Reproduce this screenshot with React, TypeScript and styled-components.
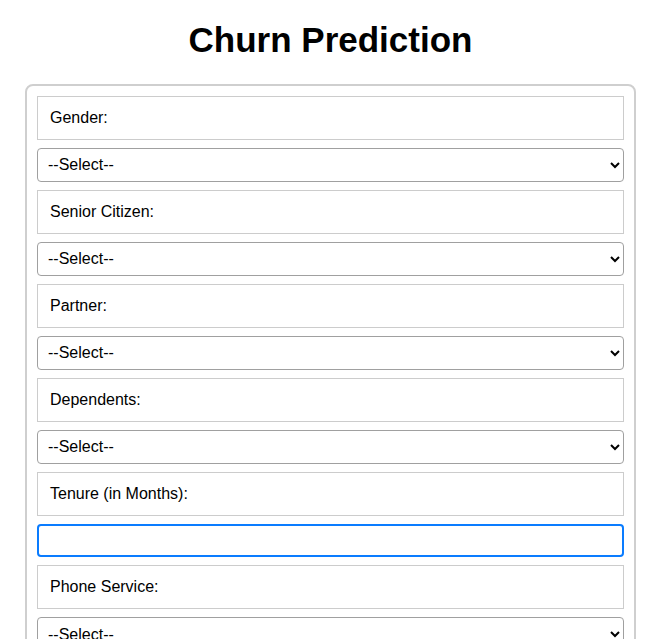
import React from "react";
import styled, { createGlobalStyle } from "styled-components";

const Global = createGlobalStyle`
  html, body { margin: 0; padding: 0; background: #fff; }
  body { font-family: "Liberation Sans", Arial, sans-serif; color: #000; }
`;

const Page = styled.div`
  padding: 19px 14px 0 25px;
`;

const Title = styled.h1`
  margin: 0 0 24px;
  font-size: 35px;
  line-height: 41px;
  font-weight: 700;
  text-align: center;
  width: 611px;
`;

const Card = styled.form`
  width: 611px;
  box-sizing: border-box;
  border: 2px solid #cfcfcf;
  border-radius: 8px;
  padding: 10px;
  display: flex;
  flex-direction: column;
  gap: 8px;
`;

const Label = styled.label`
  display: block;
  box-sizing: border-box;
  height: 44px;
  border: 1px solid #cccccc;
  padding: 12px 12px;
  font-size: 16px;
  line-height: 18px;
`;

const Select = styled.select`
  box-sizing: border-box;
  width: 100%;
  height: 33.9px;
  border: 1px solid #a0a0a0;
  border-radius: 4px;
  padding: 0 6px;
  font-family: "Liberation Sans", Arial, sans-serif;
  font-size: 16px;
  color: #000;
  background: #fff;
`;

const Input = styled.input<{ $active?: boolean }>`
  box-sizing: border-box;
  width: 100%;
  height: 33.9px;
  border: ${(p) => (p.$active ? "2px solid #0a7cff" : "1px solid #a0a0a0")};
  border-radius: 4px;
  padding: 0 8px;
  font-family: "Liberation Sans", Arial, sans-serif;
  font-size: 16px;
  outline: none;
`;

type Field = { label: string; kind: "select" | "input" };

const fields: Field[] = [
  { label: "Gender:", kind: "select" },
  { label: "Senior Citizen:", kind: "select" },
  { label: "Partner:", kind: "select" },
  { label: "Dependents:", kind: "select" },
  { label: "Tenure (in Months):", kind: "input" },
  { label: "Phone Service:", kind: "select" },
  { label: "Multiple Lines:", kind: "select" },
];

export default function App() {
  return (
    <Page>
      <Global />
      <Title>Churn Prediction</Title>
      <Card>
        {fields.map((f) => (
          <React.Fragment key={f.label}>
            <Label>{f.label}</Label>
            {f.kind === "select" ? (
              <Select defaultValue="">
                <option value="">--Select--</option>
                <option value="a">Yes</option>
                <option value="b">No</option>
              </Select>
            ) : (
              <Input type="number" $active />
            )}
          </React.Fragment>
        ))}
      </Card>
    </Page>
  );
}
